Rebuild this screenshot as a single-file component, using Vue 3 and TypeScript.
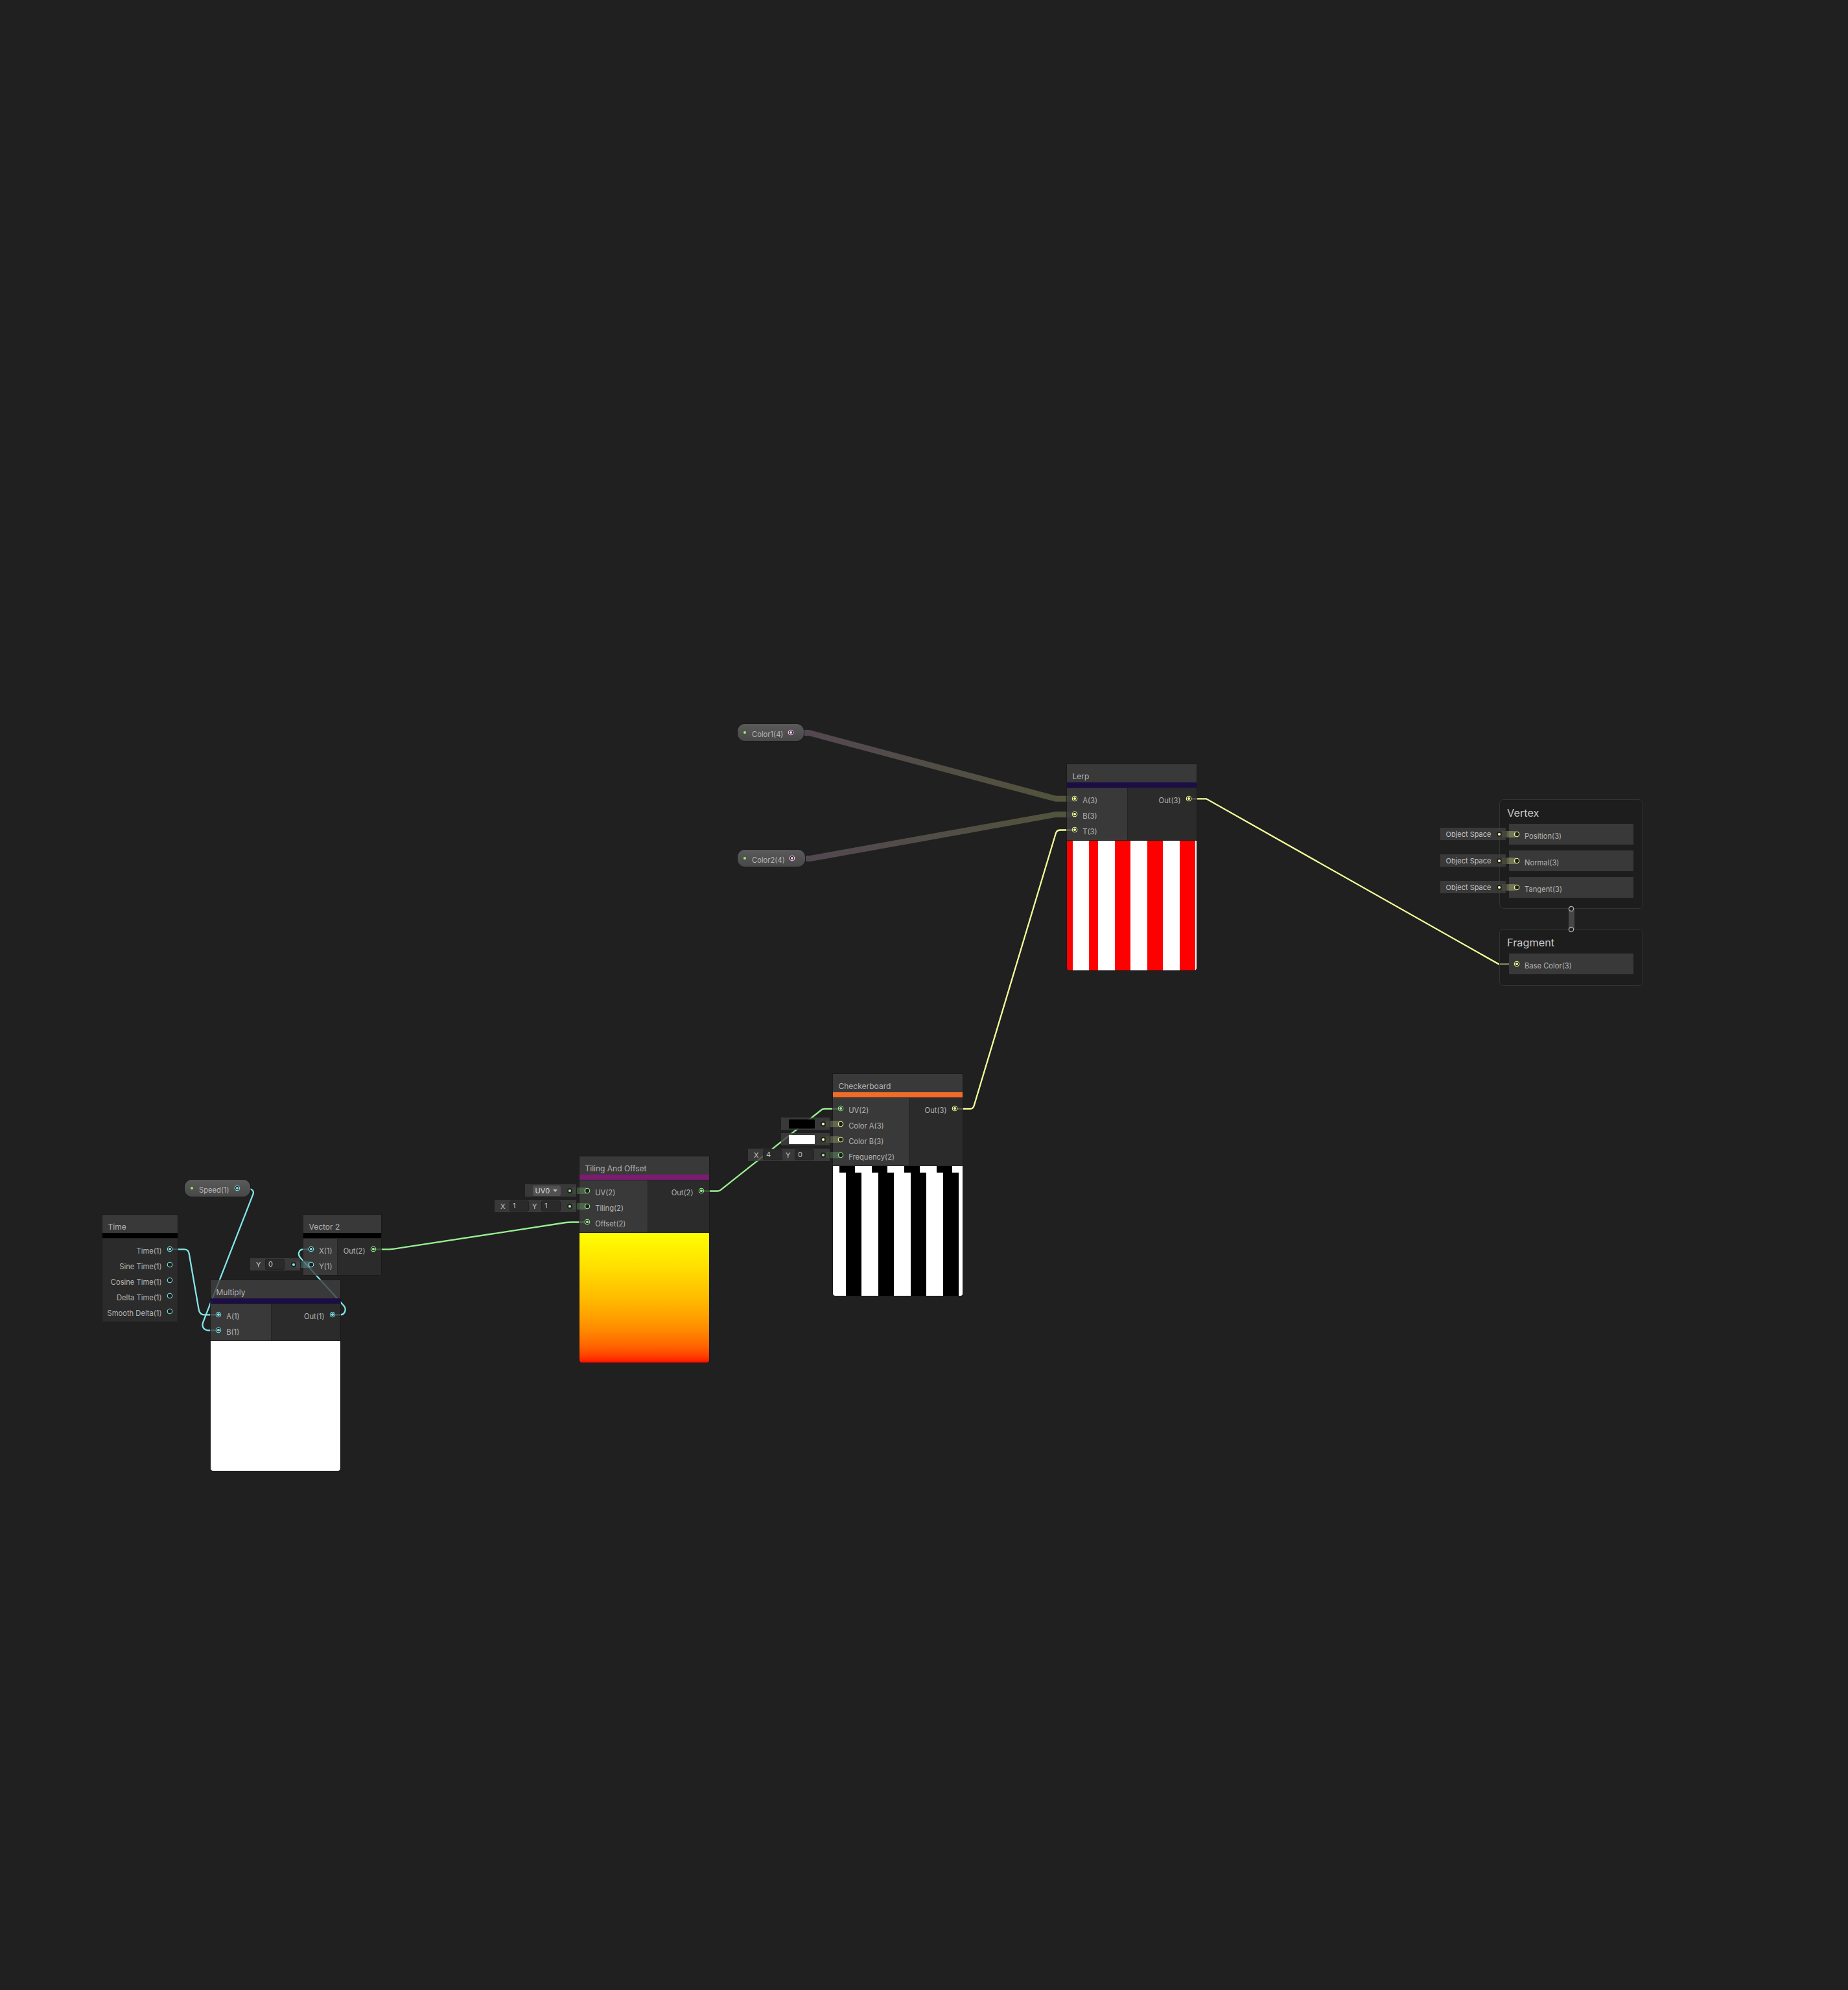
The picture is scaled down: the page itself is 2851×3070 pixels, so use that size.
<script setup lang="ts">
interface Port { label: string; color: string; on?: boolean }
interface GraphNode {
  title: string; x: number; y: number; w: number; split: number; bar: string
  ins: Port[]; outs: Port[]; preview?: string
}
interface Field { label: string; value: string }
interface Slot { x: number; y: number; w: number; color: string; kind: string; fields?: Field[]; text?: string }

// Wire and port colours by vector size
const C1 = '#84e4e7'
const C2 = '#9aef92'
const C3 = '#f6ff9a'
const C4 = '#fbcbf4'

const nodes: GraphNode[] = [
  { title: 'Time', x: 158, y: 1874, w: 116, split: 0, bar: '#000000', ins: [], outs: [
    { label: 'Time(1)', color: C1, on: true }, { label: 'Sine Time(1)', color: C1 }, { label: 'Cosine Time(1)', color: C1 },
    { label: 'Delta Time(1)', color: C1 }, { label: 'Smooth Delta(1)', color: C1 } ] },
  { title: 'Vector 2', x: 468, y: 1874, w: 120, split: 53, bar: '#000000',
    ins: [{ label: 'X(1)', color: C1, on: true }, { label: 'Y(1)', color: C1 }], outs: [{ label: 'Out(2)', color: C2, on: true }] },
  { title: 'Multiply', x: 325, y: 1975, w: 200, split: 94, bar: '#1c0d45', preview: 'white',
    ins: [{ label: 'A(1)', color: C1, on: true }, { label: 'B(1)', color: C1, on: true }], outs: [{ label: 'Out(1)', color: C1, on: true }] },
  { title: 'Tiling And Offset', x: 894, y: 1784, w: 200, split: 106, bar: '#7b1c71', preview: 'ramp',
    ins: [{ label: 'UV(2)', color: C2 }, { label: 'Tiling(2)', color: C2 }, { label: 'Offset(2)', color: C2, on: true }],
    outs: [{ label: 'Out(2)', color: C2, on: true }] },
  { title: 'Checkerboard', x: 1285, y: 1657, w: 200, split: 118, bar: '#f06c28', preview: 'checker',
    ins: [{ label: 'UV(2)', color: C2, on: true }, { label: 'Color A(3)', color: C3 }, { label: 'Color B(3)', color: C3 }, { label: 'Frequency(2)', color: C2 }],
    outs: [{ label: 'Out(3)', color: C3, on: true }] },
  { title: 'Lerp', x: 1646, y: 1179, w: 200, split: 94, bar: '#1c0d45', preview: 'stripes',
    ins: [{ label: 'A(3)', color: C3, on: true }, { label: 'B(3)', color: C3, on: true }, { label: 'T(3)', color: C3, on: true }],
    outs: [{ label: 'Out(3)', color: C3, on: true }] },
]

const properties = [
  { label: 'Speed(1)', x: 285, y: 1820, w: 101, color: C1 },
  { label: 'Color1(4)', x: 1138, y: 1117, w: 102, color: C4 },
  { label: 'Color2(4)', x: 1138, y: 1311, w: 104, color: C4 },
]

const slots: Slot[] = [
  { x: 386, y: 1941, w: 77, color: C1, kind: 'fields', fields: [{ label: 'Y', value: '0' }] },
  { x: 810, y: 1827, w: 79, color: C2, kind: 'menu', text: 'UV0' },
  { x: 763, y: 1851, w: 126, color: C2, kind: 'fields', fields: [{ label: 'X', value: '1' }, { label: 'Y', value: '1' }] },
  { x: 1205, y: 1724, w: 75, color: C3, kind: 'swatch', text: '#000000' },
  { x: 1205, y: 1748, w: 75, color: C3, kind: 'swatch', text: '#ffffff' },
  { x: 1154, y: 1772, w: 126, color: C2, kind: 'fields', fields: [{ label: 'X', value: '4' }, { label: 'Y', value: '0' }] },
  { x: 2222, y: 1277, w: 101, color: C3, kind: 'text', text: 'Object Space' },
  { x: 2222, y: 1318, w: 101, color: C3, kind: 'text', text: 'Object Space' },
  { x: 2222, y: 1359, w: 101, color: C3, kind: 'text', text: 'Object Space' },
]

const contexts = [
  { title: 'Vertex', y: 1233, h: 169, blocks: [{ label: 'Position(3)', on: false }, { label: 'Normal(3)', on: false }, { label: 'Tangent(3)', on: false }] },
  { title: 'Fragment', y: 1433, h: 88, blocks: [{ label: 'Base Color(3)', on: true }] },
]

const edges = [
  { c: C1, d: 'M262 1927.3H284Q290.5 1927.3 291.6 1933.5L306.6 2020Q308 2028.3 315 2028.3H337' },
  { c: C1, d: 'M366 1833.5H384Q392.5 1835.5 390.6 1842L313.4 2039.5C310.5 2047 315 2052.3 321 2052.3H337' },
  { c: C1, d: 'M513 2028.3H525C532 2028.3 535 2020 530.5 2014.5L463.5 1940.5C458.5 1935 461 1927.3 468 1927.3H480' },
  { c: C2, d: 'M576 1927.3H600Q604 1927.3 608 1926.7L873 1886Q877 1885.5 881 1885.5H906' },
  { c: C2, d: 'M1082 1837.5H1107Q1110 1837.5 1112 1835.7L1267.5 1712Q1269.5 1710.5 1272 1710.5H1297' },
  { c: C3, d: 'M1473 1710.5H1497Q1502 1710.5 1503.5 1703L1629 1285Q1630.5 1280.5 1636 1280.5H1658' },
  { c: C3, d: 'M1834 1232.3H1861L2312 1487.3H2340' },
]
</script>

<template>
  <main class="canvas">
    <svg class="edges" width="2851" height="3070" viewBox="0 0 2851 3070">
      <defs>
        <linearGradient id="wide" gradientUnits="userSpaceOnUse" x1="1240" y1="0" x2="1640" y2="0">
          <stop offset="0" :stop-color="C4" /><stop offset="1" :stop-color="C3" />
        </linearGradient>
      </defs>
      <g fill="none" stroke="url(#wide)" stroke-width="9" opacity=".23">
        <path d="M1241 1130.4H1248L1629 1232.3H1658" />
        <path d="M1243 1324.5H1250L1629 1256.4H1658" />
      </g>
      <path v-for="(e, i) in edges" :key="i" :d="e.d" :stroke="e.c" fill="none" stroke-width="2.3" />
    </svg>

    <section v-for="c in contexts" :key="c.title" class="context" :style="{ top: c.y + 'px', height: c.h + 'px' }">
      <h2>{{ c.title }}</h2>
      <div v-for="b in c.blocks" :key="b.label" class="block">
        <svg class="port" viewBox="0 0 10 10"><circle cx="5" cy="5" r="3.7" fill="#1d1d1d" :stroke="C3" stroke-width="1.1" /><circle v-if="b.on" cx="5" cy="5" r="2.1" :fill="C3" /></svg>
        <span>{{ b.label }}</span>
      </div>
    </section>
    <div class="link">
      <svg class="port" viewBox="0 0 10 10"><circle cx="5" cy="5" r="3.6" fill="#202020" stroke="#b4b4b4" stroke-width="1.2" /></svg>
      <svg class="port" viewBox="0 0 10 10"><circle cx="5" cy="5" r="3.6" fill="#202020" stroke="#b4b4b4" stroke-width="1.2" /></svg>
    </div>

    <article v-for="n in nodes" :key="n.title" class="node" :style="{ left: n.x + 'px', top: n.y + 'px', width: n.w + 'px' }">
      <h3>{{ n.title }}</h3>
      <div class="bar" :style="{ background: n.bar }"></div>
      <div class="body">
        <div v-if="n.ins.length" class="ins" :style="{ width: n.split + 'px' }">
          <div v-for="p in n.ins" :key="p.label" class="row">
            <svg class="port" viewBox="0 0 10 10"><circle cx="5" cy="5" r="3.7" fill="#1d1d1d" :stroke="p.color" stroke-width="1.1" /><circle v-if="p.on" cx="5" cy="5" r="2.1" :fill="p.color" /></svg>
            <span>{{ p.label }}</span>
          </div>
        </div>
        <div class="outs">
          <div v-for="p in n.outs" :key="p.label" class="row">
            <span>{{ p.label }}</span>
            <svg class="port" viewBox="0 0 10 10"><circle cx="5" cy="5" r="3.7" fill="#1d1d1d" :stroke="p.color" stroke-width="1.1" /><circle v-if="p.on" cx="5" cy="5" r="2.1" :fill="p.color" /></svg>
          </div>
        </div>
      </div>
      <div v-if="n.preview" class="preview" :class="n.preview"></div>
    </article>

    <div v-for="p in properties" :key="p.label" class="pill" :style="{ left: p.x + 'px', top: p.y + 'px', width: p.w + 'px' }">
      <i></i><span>{{ p.label }}</span>
      <svg class="port" viewBox="0 0 10 10"><circle cx="5" cy="5" r="3.7" fill="#1d1d1d" :stroke="p.color" stroke-width="1.1" /><circle cx="5" cy="5" r="2.1" :fill="p.color" /></svg>
    </div>

    <div v-for="(s, i) in slots" :key="i" class="slot" :class="s.kind" :style="{ left: s.x + 'px', top: s.y + 'px', width: s.w + 'px', '--c': s.color }">
      <template v-for="f in s.fields ?? []" :key="f.label">
        <label>{{ f.label }}</label><b>{{ f.value }}</b>
      </template>
      <button v-if="s.kind === 'menu'">{{ s.text }}<svg width="7" height="4" viewBox="0 0 7 4"><path d="M0 0H7L3.5 4Z" fill="#c0c0c0" /></svg></button>
      <em v-if="s.kind === 'swatch'" :style="{ background: s.text }"></em>
      <span v-if="s.kind === 'text'">{{ s.text }}</span>
      <svg class="dot" viewBox="0 0 10 10"><circle cx="5" cy="5" r="4" fill="#212121" /><circle cx="5" cy="5" r="2.1" :fill="s.color" /></svg>
      <u></u>
    </div>
  </main>
</template>

<style>
body { margin: 0; background: #202020; }
</style>

<style scoped>
.canvas { position: relative; width: 2851px; height: 3070px; overflow: hidden; background: #202020; font: 11.2px/14px Inter, sans-serif; color: #b4b4b4; }
.edges { position: absolute; inset: 0; }
.port { display: block; width: 10px; height: 10px; flex: none; }
.node { position: absolute; box-shadow: 0 0 0 1px rgba(25, 25, 25, .8); border-radius: 0 0 4px 4px; }
.node h3 { margin: 0; height: 28px; box-sizing: border-box; padding: 11px 8px 0 8.5px; font-size: 12px; font-weight: 400; line-height: 15px; white-space: nowrap; background: rgba(63, 63, 63, .804); }
.bar { height: 8px; }
.body { display: flex; border-top: 1px solid #232323; }
.ins { box-sizing: border-box; padding: 4px 0 4px 7px; background: rgba(63, 63, 63, .804); border-right: 1px solid #232323; }
.outs { flex: 1; padding: 4px 7px 4px 0; background: rgba(46, 46, 46, .804); }
.row { display: flex; align-items: center; height: 24px; white-space: nowrap; }
.outs .row { justify-content: flex-end; }
.row span { position: relative; top: 3px; }
.ins span { margin-left: 7.2px; }
.outs span { margin-right: 7.5px; }
.preview { height: 200px; border-top: 1px solid #232323; border-radius: 0 0 4px 4px; background-clip: padding-box; }
.white { background-color: #fff; }
.ramp { background-image: linear-gradient(#ff0 0%, #ffe100 25%, #ffbc00 50%, #ffa000 65%, #ff8900 75%, #ff6c00 85%, #ff5900 90%, #ff3f00 95%, #ff2700 98%, #ff0a00 100%); }
.stripes { background-image: linear-gradient(90deg, #f00 0 9px, #fff 9px 34px, #f00 34px 47.5px, #fff 47.5px 73.5px, #f00 73.5px 97.5px, #fff 97.5px 123.5px, #f00 123.5px 147.5px, #fff 147.5px 173.5px, #f00 173.5px 197.5px, #fff 197.5px); }
.checker { background: repeating-linear-gradient(90deg, #000 0 24px, #fff 24px 50px) 10px 0 / 190px 10px no-repeat, repeating-linear-gradient(90deg, #000 0 24px, #fff 24px 50px) 19.5px 10px / 180.5px 190px no-repeat, #fff; background-clip: padding-box; }
.context { position: absolute; left: 2313px; width: 222px; box-sizing: border-box; border: 1px solid #333; border-radius: 7px; background: rgba(25, 25, 25, .5); padding: 0 14px; }
.context h2 { margin: 0 0 0 -3px; height: 37px; padding-top: 10px; box-sizing: border-box; font-size: 16.3px; line-height: 20px; font-weight: 400; color: #c8c8c8; }
.block { display: flex; align-items: center; height: 32px; margin-bottom: 9px; padding-left: 7px; background: #393939; }
.block span { position: relative; top: 3px; margin-left: 7px; }
.link { position: absolute; left: 2419px; top: 1397px; width: 10px; height: 42px; display: flex; flex-direction: column; align-items: center; justify-content: space-between; background: linear-gradient(#464646, #464646) 0.5px 5px / 9px 32px no-repeat; }
.pill { position: absolute; box-sizing: border-box; height: 26px; border-radius: 11px; display: flex; align-items: center; padding: 0 15px 0 9px; background: linear-gradient(#5a5a5a, #484848); box-shadow: 0 0 0 1px rgba(25, 25, 25, .6); }
.pill i { width: 4px; height: 4px; border-radius: 2px; background: #94f060; }
.pill span { position: relative; top: 3px; margin-left: 9px; flex: 1; }
.slot { position: absolute; box-sizing: border-box; height: 19px; display: flex; align-items: center; justify-content: flex-end; padding-right: 5px; background: rgba(63, 63, 63, .804); color: #c4c4c4; font-size: 11px; }
.slot b { box-sizing: border-box; width: 30px; height: 17px; margin-right: 9px; padding: 0 0 0 4px; border: 1px solid #212121; border-radius: 3px; background: #2a2a2a; font-weight: 400; }
.slot label { width: 14px; }
.slot b + label { margin-left: -4px; }
.slot button { display: flex; align-items: center; gap: 5px; width: 43px; height: 16px; margin-right: 9px; padding: 0 3.5px; border: 0; border-radius: 3px; background: #515151; color: #dadada; font: inherit; }
.slot em { width: 40px; height: 14px; margin: 1px 8px 0 0; border-radius: 1px; }
.slot span { margin-right: 7.5px; }
.dot { width: 10px; height: 10px; margin-top: 1px; flex: none; }
.slot u { position: absolute; left: calc(100% + 1px); top: 5px; width: 14px; height: 10px; background: var(--c); opacity: .23; }
.slot.text u { opacity: .3; }
.slot::after { content: ''; position: absolute; right: 0; top: 5px; width: 6px; height: 10px; background: var(--c); opacity: .07; }
</style>
